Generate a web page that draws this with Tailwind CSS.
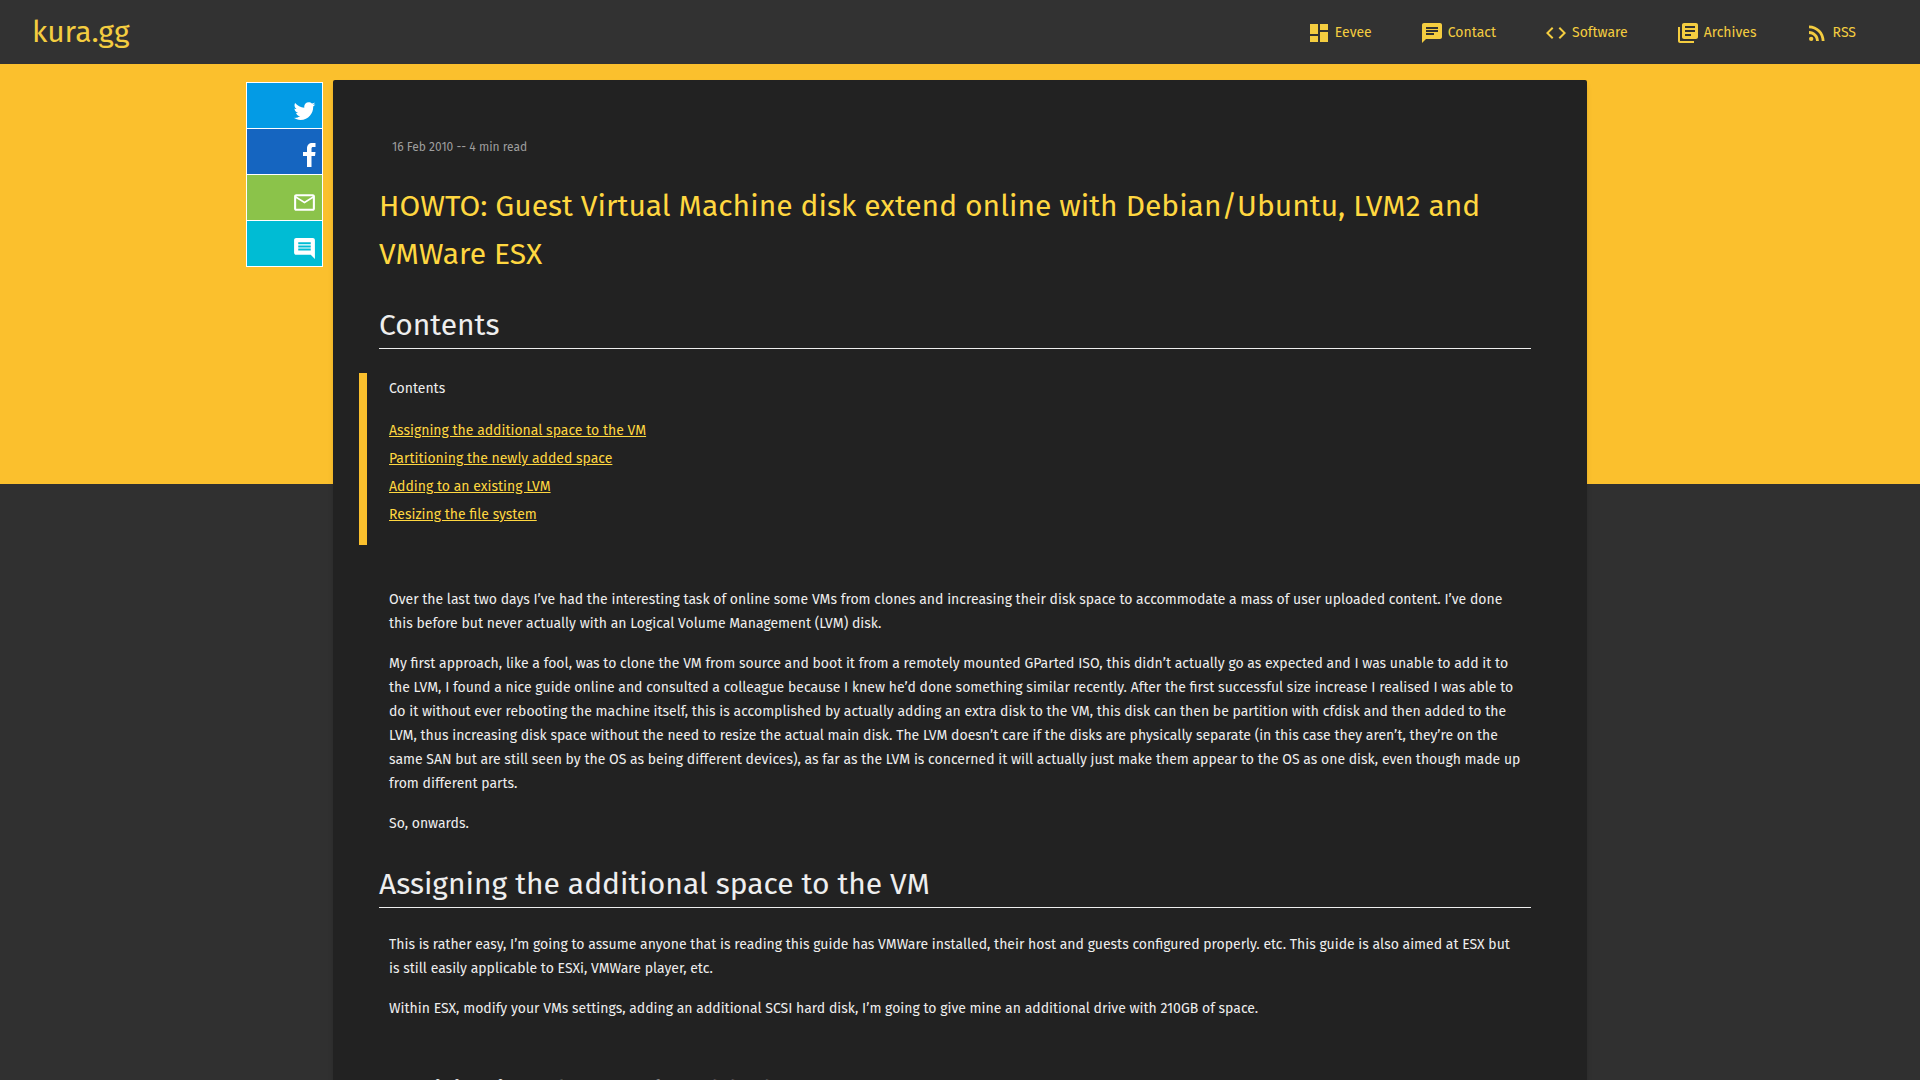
<!DOCTYPE html>
<html lang="en">
<head>
<meta charset="utf-8">
<meta name="viewport" content="width=device-width, initial-scale=1">
<title>HOWTO: Guest Virtual Machine disk extend online</title>
<script src="https://cdn.jsdelivr.net/npm/@tailwindcss/browser@4"></script>
</head>
<body class="bg-[#303030] font-['Fira_Sans',Roboto,sans-serif] text-sm/6 text-[#eeeeee]">
<div class="flex h-screen flex-col overflow-hidden">
<header class="flex h-16 shrink-0 items-center justify-between bg-[#323232] pr-10 pl-8 text-[#f4cd40]">
  <a href="#" class="text-[30px]/10">kura.gg</a>
  <nav class="flex pt-0.5">
    <a href="#" class="flex items-center gap-1 px-6"><svg class="size-6" viewBox="0 0 24 24" fill="currentColor"><path d="M3 13h8V3H3v10zm0 8h8v-6H3v6zm10 0h8V11h-8v10zm0-18v6h8V3h-8z"/></svg>Eevee</a>
    <a href="#" class="flex items-center gap-1 px-6"><svg class="size-6" viewBox="0 0 24 24" fill="currentColor"><path d="M20 2H4c-1.100 0-1.990.9-1.990 2L2 22l4-4h14c1.100 0 2-.9 2-2V4c0-1.100-.9-2-2-2zM6 9h12v2H6V9zm8 5H6v-2h8v2zm4-6H6V6h12v2z"/></svg>Contact</a>
    <a href="#" class="flex items-center gap-1 px-6"><svg class="size-6" viewBox="0 0 24 24" fill="currentColor"><path d="M9.400 16.600L4.800 12l4.600-4.600L8 6l-6 6 6 6 1.400-1.400zm5.200 0l4.600-4.600-4.600-4.600L16 6l6 6-6 6-1.400-1.400z"/></svg>Software</a>
    <a href="#" class="flex items-center gap-1 px-6"><svg class="size-6" viewBox="0 0 24 24" fill="currentColor"><path d="M4 6H2v14c0 1.100.9 2 2 2h14v-2H4V6zm16-4H8c-1.100 0-2 .9-2 2v12c0 1.100.9 2 2 2h12c1.100 0 2-.9 2-2V4c0-1.100-.9-2-2-2zm-1 9H9V9h10v2zm-4 4H9v-2h6v2zm4-8H9V5h10v2z"/></svg>Archives</a>
    <a href="#" class="flex items-center gap-1 px-6"><svg class="size-6" viewBox="0 0 24 24" fill="currentColor"><circle cx="6.180" cy="17.820" r="2.180"/><path d="M4 4.440v2.830c7.030 0 12.730 5.700 12.730 12.730h2.830c0-8.590-6.970-15.560-15.560-15.560zm0 5.660v2.830c3.900 0 7.070 3.170 7.070 7.070h2.830c0-5.470-4.430-9.900-9.900-9.900z"/></svg>RSS</a>
  </nav>
</header>
<main class="grid grow grid-cols-[1fr_minmax(0,1254px)_1fr] bg-[linear-gradient(to_bottom,#fbc02d_420px,#303030_420px)] pt-4">
  <aside class="mt-[2px] mr-[10px] w-[77px] self-start justify-self-end border border-b-0 border-white text-white">
    <a href="#" aria-label="Share on Twitter" class="flex h-[46px] items-end justify-end border-b bg-[#039be5] p-[5px]"><svg class="size-[25px]" viewBox="0 0 24 24" fill="currentColor"><path d="M22.460 6c-.77.350-1.600.580-2.460.690.880-.530 1.560-1.370 1.880-2.380-.83.500-1.750.850-2.720 1.050C18.370 4.500 17.260 4 16 4c-2.350 0-4.270 1.920-4.270 4.290 0 .340.040.670.110.980C8.280 9.090 5.110 7.380 3 4.790c-.370.630-.580 1.370-.580 2.150 0 1.490.750 2.810 1.910 3.560-.710 0-1.370-.2-1.950-.5v.030c0 2.080 1.480 3.820 3.440 4.210a4.220 4.220 0 0 1-1.930.070 4.280 4.280 0 0 0 4 2.980 8.521 8.521 0 0 1-5.330 1.840c-.340 0-.680-.020-1.020-.060C3.440 20.290 5.700 21 8.120 21 16 21 20.330 14.460 20.330 8.790c0-.190 0-.370-.010-.560.840-.6 1.560-1.360 2.140-2.230z"/></svg></a>
    <a href="#" aria-label="Share on Facebook" class="flex h-[46px] items-end justify-end border-b bg-[#1565c0] p-[5px]"><svg class="size-[25px] overflow-visible" viewBox="-11 1 25 25" fill="currentColor"><path d="M12.500 0v4h-2.300C8.900 4 8.500 4.600 8.500 6v3h4l-.5 4H8.500v11H4V13H0V9h4V5.500C4 2 6 0 9.200 0z"/></svg></a>
    <a href="#" aria-label="Share by email" class="flex h-[46px] items-end justify-end border-b bg-[#8bc34a] p-[5px]"><svg class="size-[25px]" viewBox="0 0 24 24" fill="currentColor"><path d="M20 4H4c-1.100 0-1.990.9-1.990 2L2 18c0 1.100.9 2 2 2h16c1.100 0 2-.9 2-2V6c0-1.100-.9-2-2-2zm0 14H4V8l8 5 8-5v10zm-8-7L4 6h16l-8 5z"/></svg></a>
    <a href="#" aria-label="Comments" class="flex h-[46px] items-end justify-end border-b bg-[#00bcd4] p-[5px]"><svg class="size-[25px]" viewBox="0 0 24 24" fill="currentColor"><path d="M21.990 4c0-1.100-.89-2-1.990-2H4c-1.100 0-2 .9-2 2v12c0 1.100.9 2 2 2h14l4 4-.010-18zM18 14H6v-2h12v2zm0-3H6V9h12v2zm0-3H6V6h12v2z"/></svg></a>
  </aside>
  <article class="rounded-t-xs bg-[#222222] pt-[55px] pr-14 pb-10 pl-[46px] shadow-md">
    <p class="px-[13px] text-xs/6 text-[#9e9e9e]">16 Feb 2010 -- 4 min read</p>
    <h1 class="mt-[23px] text-[30px]/12 text-[#ffd740]">HOWTO: Guest Virtual Machine disk extend online with Debian/Ubuntu, LVM2 and VMWare ESX</h1>
    <h2 class="mt-[27px] border-b border-[#eeeeee] pb-[3px] text-[30px]/10">Contents</h2>
    <nav aria-label="Contents" class="mt-6 -ml-5 border-l-8 border-[#fbc02d] px-[22px] pt-1 pb-4">
      <p>Contents</p>
      <ul class="mt-4 text-[#ffd740] underline leading-7">
        <li><a href="#assigning">Assigning the additional space to the VM</a></li>
        <li><a href="#partitioning">Partitioning the newly added space</a></li>
        <li><a href="#adding">Adding to an existing LVM</a></li>
        <li><a href="#resizing">Resizing the file system</a></li>
      </ul>
    </nav>
    <div class="mt-[43px] flex flex-col gap-4 px-[10px]">
      <p>Over the last two days I’ve had the interesting task of online some VMs from clones and increasing their disk space to accommodate a mass of user uploaded content. I’ve done this before but never actually with an Logical Volume Management (LVM) disk.</p>
      <p>My first approach, like a fool, was to clone the VM from source and boot it from a remotely mounted GParted ISO, this didn’t actually go as expected and I was unable to add it to the LVM, I found a nice guide online and consulted a colleague because I knew he’d done something similar recently. After the first successful size increase I realised I was able to do it without ever rebooting the machine itself, this is accomplished by actually adding an extra disk to the VM, this disk can then be partition with cfdisk and then added to the LVM, thus increasing disk space without the need to resize the actual main disk. The LVM doesn’t care if the disks are physically separate (in this case they aren’t, they’re on the same SAN but are still seen by the OS as being different devices), as far as the LVM is concerned it will actually just make them appear to the OS as one disk, even though made up from different parts.</p>
      <p>So, onwards.</p>
    </div>
    <h2 id="assigning" class="mt-7 border-b border-[#eeeeee] pb-[3px] text-[30px]/10">Assigning the additional space to the VM</h2>
    <div class="mt-[25px] flex flex-col gap-4 px-[10px]">
      <p>This is rather easy, I’m going to assume anyone that is reading this guide has VMWare installed, their host and guests configured properly. etc. This guide is also aimed at ESX but is still easily applicable to ESXi, VMWare player, etc.</p>
      <p>Within ESX, modify your VMs settings, adding an additional SCSI hard disk, I’m going to give mine an additional drive with 210GB of space.</p>
    </div>
    <h2 id="partitioning" class="mt-[51px] border-b border-[#eeeeee] pb-[3px] text-[30px]/10">Partitioning the newly added space</h2>
  </article>
</main>
</div>
</body>
</html>
